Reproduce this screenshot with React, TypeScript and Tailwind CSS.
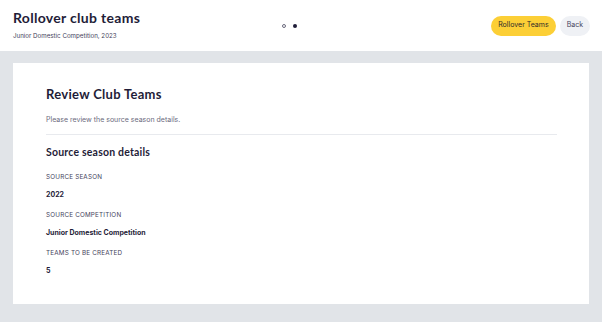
export default function App() {
  const details = [
    { label: "SOURCE SEASON", value: "2022" },
    { label: "SOURCE COMPETITION", value: "Junior Domestic Competition" },
    { label: "TEAMS TO BE CREATED", value: "5" },
  ]

  return (
    <div className="min-h-screen h-[322px] bg-[#e1e4e8] font-['Inter',sans-serif] text-[#1f1d38]">
      {/* Header */}
      <header className="h-[51px] bg-white flex items-center justify-between pl-[13px] pr-[12px]">
        <div className="w-[200px]">
          <h1 className="font-['Lato',sans-serif] text-[14px] leading-[18px] font-bold tracking-[0.3px] -mt-[2px]">Rollover club teams</h1>
          <p className="text-[6.2px] leading-[8px] text-[#45435c] mt-[5px]">Junior Domestic Competition, 2023</p>
        </div>
        <div className="flex items-center gap-[7px] -ml-[24px]">
          <span className="w-[4px] h-[4px] rounded-full border border-[#6b6a7d]" />
          <span className="w-[4px] h-[4px] rounded-full bg-[#1f1d38]" />
        </div>
        <div className="flex items-center gap-[4px] w-[200px] justify-end">
          <button className="h-[20px] px-[7px] rounded-full bg-[#fccf36] text-[7px] text-[#2e2a2a]">Rollover Teams</button>
          <button className="h-[20px] px-[7px] rounded-full bg-[#eff1f5] text-[7px] text-[#45435c]">Back</button>
        </div>
      </header>

      {/* Card */}
      <div className="px-[13px] pt-[12px]">
        <div className="bg-white h-[241px] pl-[33px] pr-[32px] pt-[23px]">
          <h2 className="font-['Lato',sans-serif] text-[13px] leading-[16px] font-bold tracking-[0.3px]">Review Club Teams</h2>
          <p className="text-[7px] leading-[9px] text-[#6b6a7d] mt-[13px]">Please review the source season details.</p>
          <div className="border-t border-[#e8eaee] mt-[10px]" />
          <h3 className="font-['Lato',sans-serif] text-[10.5px] leading-[13px] font-bold tracking-[0.2px] mt-[11px]">Source season details</h3>
          <div className="mt-[14px] flex flex-col gap-[12px]">
            {details.map((d) => (
              <div key={d.label}>
                <div className="text-[6.3px] leading-[8px] text-[#45435c] tracking-[0.2px]">{d.label}</div>
                <div className="text-[7px] leading-[9px] font-bold mt-[9px]">{d.value}</div>
              </div>
            ))}
          </div>
        </div>
      </div>
    </div>
  )
}
